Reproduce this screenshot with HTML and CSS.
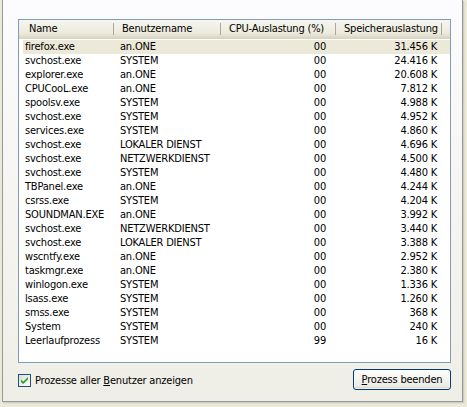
FILE: index.html
```html
<!DOCTYPE html>
<html lang="de">
<head>
<meta charset="utf-8">
<title>Prozesse</title>
<link rel="stylesheet" href="styles.css">
</head>
<body>
<div class="frame">
  <div class="panel">
    <div class="listbox">
      <div class="lv-header">
        <div class="hcell">Name</div>
        <div class="hcell">Benutzername</div>
        <div class="hcell">CPU-Auslastung (%)</div>
        <div class="hcell">Speicherauslastung</div>
        <div class="hcell filler"></div>
      </div>
      <div class="lv-body">
        <div class="row selected"><span class="c-name">firefox.exe</span><span class="c-user">an.ONE</span><span class="c-cpu">00</span><span class="c-mem">31.456 K</span></div>
        <div class="row"><span class="c-name">svchost.exe</span><span class="c-user">SYSTEM</span><span class="c-cpu">00</span><span class="c-mem">24.416 K</span></div>
        <div class="row"><span class="c-name">explorer.exe</span><span class="c-user">an.ONE</span><span class="c-cpu">00</span><span class="c-mem">20.608 K</span></div>
        <div class="row"><span class="c-name">CPUCooL.exe</span><span class="c-user">an.ONE</span><span class="c-cpu">00</span><span class="c-mem">7.812 K</span></div>
        <div class="row"><span class="c-name">spoolsv.exe</span><span class="c-user">SYSTEM</span><span class="c-cpu">00</span><span class="c-mem">4.988 K</span></div>
        <div class="row"><span class="c-name">svchost.exe</span><span class="c-user">SYSTEM</span><span class="c-cpu">00</span><span class="c-mem">4.952 K</span></div>
        <div class="row"><span class="c-name">services.exe</span><span class="c-user">SYSTEM</span><span class="c-cpu">00</span><span class="c-mem">4.860 K</span></div>
        <div class="row"><span class="c-name">svchost.exe</span><span class="c-user">LOKALER DIENST</span><span class="c-cpu">00</span><span class="c-mem">4.696 K</span></div>
        <div class="row"><span class="c-name">svchost.exe</span><span class="c-user">NETZWERKDIENST</span><span class="c-cpu">00</span><span class="c-mem">4.500 K</span></div>
        <div class="row"><span class="c-name">svchost.exe</span><span class="c-user">SYSTEM</span><span class="c-cpu">00</span><span class="c-mem">4.480 K</span></div>
        <div class="row"><span class="c-name">TBPanel.exe</span><span class="c-user">an.ONE</span><span class="c-cpu">00</span><span class="c-mem">4.244 K</span></div>
        <div class="row"><span class="c-name">csrss.exe</span><span class="c-user">SYSTEM</span><span class="c-cpu">00</span><span class="c-mem">4.204 K</span></div>
        <div class="row"><span class="c-name">SOUNDMAN.EXE</span><span class="c-user">an.ONE</span><span class="c-cpu">00</span><span class="c-mem">3.992 K</span></div>
        <div class="row"><span class="c-name">svchost.exe</span><span class="c-user">NETZWERKDIENST</span><span class="c-cpu">00</span><span class="c-mem">3.440 K</span></div>
        <div class="row"><span class="c-name">svchost.exe</span><span class="c-user">LOKALER DIENST</span><span class="c-cpu">00</span><span class="c-mem">3.388 K</span></div>
        <div class="row"><span class="c-name">wscntfy.exe</span><span class="c-user">an.ONE</span><span class="c-cpu">00</span><span class="c-mem">2.952 K</span></div>
        <div class="row"><span class="c-name">taskmgr.exe</span><span class="c-user">an.ONE</span><span class="c-cpu">00</span><span class="c-mem">2.380 K</span></div>
        <div class="row"><span class="c-name">winlogon.exe</span><span class="c-user">SYSTEM</span><span class="c-cpu">00</span><span class="c-mem">1.336 K</span></div>
        <div class="row"><span class="c-name">lsass.exe</span><span class="c-user">SYSTEM</span><span class="c-cpu">00</span><span class="c-mem">1.260 K</span></div>
        <div class="row"><span class="c-name">smss.exe</span><span class="c-user">SYSTEM</span><span class="c-cpu">00</span><span class="c-mem">368 K</span></div>
        <div class="row"><span class="c-name">System</span><span class="c-user">SYSTEM</span><span class="c-cpu">00</span><span class="c-mem">240 K</span></div>
        <div class="row"><span class="c-name">Leerlaufprozess</span><span class="c-user">SYSTEM</span><span class="c-cpu">99</span><span class="c-mem">16 K</span></div>
      </div>
    </div>
    <div class="footer">
      <label class="check">
        <span class="checkbox">
          <svg width="13" height="13" viewBox="0 0 13 13"><path d="M3 5.5 L5.2 7.7 L10 2.9 L10 5.3 L5.2 10.1 L3 7.9 Z" fill="#21a121"/></svg>
        </span>
        <span class="check-label">Prozesse aller <u>B</u>enutzer anzeigen</span>
      </label>
      <button class="btn"><u>P</u>rozess beenden</button>
    </div>
  </div>
</div>
</body>
</html>
```

FILE: styles.css
```css
html, body {
  margin: 0;
  padding: 0;
}
body {
  background: #ece9d8;
  font-family: "DejaVu Sans Condensed", "Liberation Sans", sans-serif;
  font-size: 11px;
  letter-spacing: -0.2px;
  color: #000;
}
.frame {
  width: 467px;
  height: 407px;
  background: #ece9d8;
  padding-left: 2px;
  box-sizing: border-box;
}
.panel {
  width: 461px;
  height: 402px;
  box-sizing: border-box;
  border-left: 1px solid #919b9c;
  border-right: 1px solid #919b9c;
  border-bottom: 1px solid #919b9c;
  box-shadow: 1px 1px 0 #d0cdc0, 2px 2px 0 #e2dfd0;
  background: linear-gradient(#fcfcfe, #f4f3ee 60%, #efeee6);
  padding: 19px 11px 0 15px;
  display: flex;
  flex-direction: column;
}
.listbox {
  width: 433px;
  height: 344px;
  box-sizing: border-box;
  border: 1px solid #7f9db9;
  background: #fff;
  overflow: hidden;
}
.lv-header {
  display: grid;
  grid-template-columns: 95px 107px 115px 106px 1fr;
  height: 19px;
  background: linear-gradient(#f6f6f1, #ebeadb 70%, #e2decd 85%, #d6d2c2);
}
.hcell {
  position: relative;
  padding-left: 8px;
  line-height: 18px;
  white-space: nowrap;
  overflow: hidden;
}
.hcell:first-child {
  padding-left: 10px;
}
.hcell::after {
  content: "";
  position: absolute;
  right: 0;
  top: 3px;
  height: 12px;
  width: 1px;
  background: #aca899;
  box-shadow: 1px 0 0 #fff;
}
.hcell.filler::after {
  display: none;
}
.lv-body {
  padding-top: 1px;
}
.row {
  display: grid;
  grid-template-columns: 95px 107px 115px 106px;
  height: 14px;
  line-height: 14px;
  white-space: nowrap;
}
.row.selected {
  background: linear-gradient(#ece9d8, #ece9d8) no-repeat 4px 0 / calc(100% - 4px) 100%;
}
.c-name {
  padding-left: 6px;
}
.c-user {
  padding-left: 6px;
}
.c-cpu {
  text-align: right;
  padding-right: 10px;
}
.c-mem {
  text-align: right;
  padding-right: 5px;
}
.footer {
  display: flex;
  justify-content: space-between;
  align-items: center;
  width: 433px;
  margin-top: 6px;
}
.check {
  display: flex;
  align-items: center;
  gap: 4px;
  margin-top: 1px;
}
.checkbox {
  width: 13px;
  height: 13px;
  box-sizing: border-box;
  border: 1px solid #1c5180;
  background: linear-gradient(135deg, #dcdcd7, #fff);
  display: block;
  position: relative;
}
.checkbox svg {
  position: absolute;
  left: -1px;
  top: -1px;
}
.check-label u, .btn u {
  text-decoration: underline;
}
.btn {
  width: 98px;
  height: 21px;
  box-sizing: border-box;
  border: 1px solid #003c74;
  border-radius: 3px;
  background: linear-gradient(#fff, #f3f3ef 50%, #ecebe6 85%, #d6d0c5);
  box-shadow: inset 0 0 0 1px rgba(255,255,255,0.6);
  font-family: inherit;
  font-size: 11px;
  letter-spacing: -0.2px;
  color: #000;
  padding: 0;
}
```
